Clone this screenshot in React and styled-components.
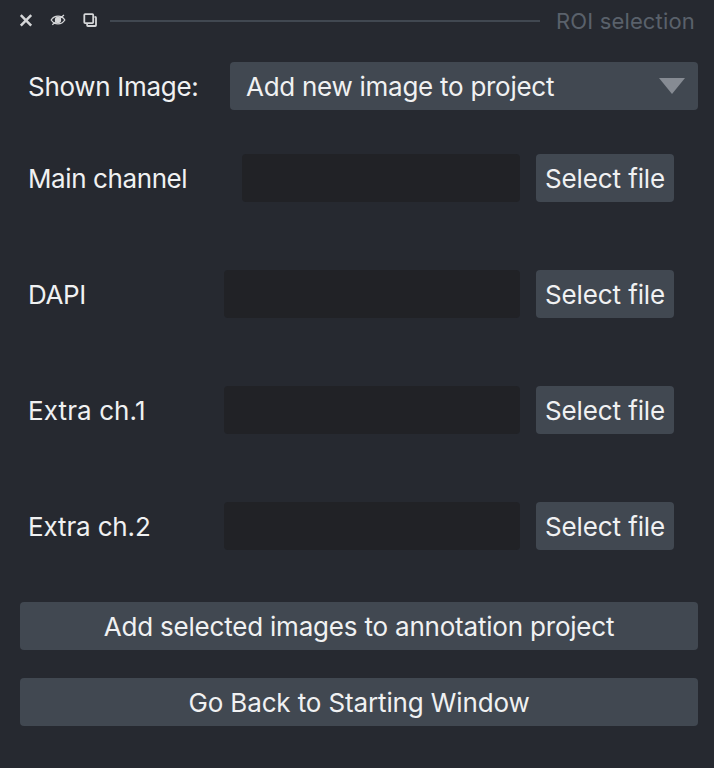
import React from "react";
import styled, { createGlobalStyle } from "styled-components";

const Global = createGlobalStyle`
  * { box-sizing: border-box; }
  body { margin: 0; background: #262930; }
`;

const Panel = styled.main`
  width: 714px;
  height: 768px;
  display: flex;
  flex-direction: column;
  background: #262930;
  color: #f0f1f2;
  font: 26px/48px Inter, sans-serif;
  overflow: hidden;
  white-space: nowrap;
`;

const TitleBar = styled.header`
  height: 40px;
  display: flex;
  align-items: center;
  padding: 0 20px 0 18px;
`;

const IconButton = styled.button`
  width: 16px;
  height: 16px;
  margin-right: 16px;
  padding: 0;
  border: 0;
  background: none;
  color: #d5d6d8;
  svg { display: block; }
`;

const Rule = styled.div`
  flex: none;
  width: 430px;
  height: 2px;
  margin: 2px 0 0 -4px;
  background: #414851;
`;

const Title = styled.span`
  margin-left: 16px;
  padding-top: 2px;
  font-size: 22px;
  line-height: 40px;
  letter-spacing: 0.15px;
  color: #5a616b;
`;

const ImageRow = styled.div`
  display: flex;
  height: 48px;
  margin-top: 22px;
  padding: 0 16px 0 28px;
`;

const Label = styled.label`
  flex: 1;
  padding-top: 1px;
  line-height: 48px;
  letter-spacing: ${(p) => p.$tracking || 0}px;
`;

const Select = styled.button`
  width: 468px;
  height: 48px;
  display: flex;
  align-items: center;
  justify-content: space-between;
  padding: 2px 13px 0 16px;
  border: 0;
  border-radius: 4px;
  background: #414851;
  color: inherit;
  font: inherit;
  letter-spacing: -0.27px;
  svg { margin-top: -2px; }
`;

const Channels = styled.section`
  display: grid;
  gap: 68px;
  margin-top: 44px;
  padding: 0 40px 0 28px;
`;

const ChannelRow = styled.div`
  display: flex;
  height: 48px;
`;

const FileInput = styled.input`
  width: ${(p) => p.$width}px;
  height: 48px;
  margin-right: 16px;
  border: 0;
  border-radius: 4px;
  background: #212226;
  color: inherit;
  font: inherit;
`;

const Button = styled.button`
  height: 48px;
  padding: 2px 0 0;
  width: ${(p) => p.$width || "auto"};
  border: 0;
  border-radius: 4px;
  background: #414851;
  color: inherit;
  font: inherit;
  line-height: 46px;
  letter-spacing: ${(p) => p.$tracking || 0}px;
`;

const Actions = styled.footer`
  display: grid;
  gap: 28px;
  margin-top: 52px;
  padding: 0 16px 0 20px;
`;

const channels = [
  { name: "Main channel", width: 278, tracking: -0.4 },
  { name: "DAPI", width: 296, tracking: -0.4 },
  { name: "Extra ch.1", width: 296, tracking: 0.1 },
  { name: "Extra ch.2", width: 296, tracking: -0.15 },
];

export default function App() {
  return (
    <Panel>
      <Global />
      <TitleBar>
        <IconButton aria-label="Close">
          <svg width="16" height="16" viewBox="0 0 16 16" fill="none" stroke="currentColor" strokeWidth="2.5">
            <path d="M2.8 3.2l10.4 10.4M13.2 3.2L2.8 13.6" />
          </svg>
        </IconButton>
        <IconButton aria-label="Hide">
          <svg width="16" height="16" viewBox="0 0 16 16" fill="none" stroke="currentColor" strokeWidth="1.3">
            <path d="M1.2 8c3.2-5.2 10.4-5.2 13.6 0c-3.2 5.2-10.4 5.2-13.6 0zM2.3 12.8L14 3" />
            <circle cx="8" cy="8" r="2.5" fill="currentColor" />
          </svg>
        </IconButton>
        <IconButton aria-label="Float">
          <svg width="16" height="16" viewBox="0 0 16 16" fill="none" stroke="currentColor" strokeWidth="1.8" strokeLinejoin="round" strokeLinecap="round">
            <rect x="2.3" y="2.2" width="8.9" height="8.9" rx="0.8" />
            <path d="M5.1 12.5V13.2q0 .8.8.8H13.2q.8 0 .8-.8V5.8q0-.8-.8-.8" />
          </svg>
        </IconButton>
        <Rule />
        <Title>ROI selection</Title>
      </TitleBar>
      <ImageRow>
        <Label $tracking={-0.3}>Shown Image:</Label>
        <Select>
          <span>Add new image to project</span>
          <svg width="26" height="16" viewBox="0 0 26 16"><path d="M0 0h26L13 16z" fill="#868b93" /></svg>
        </Select>
      </ImageRow>
      <Channels>
        {channels.map((c) => (
          <ChannelRow key={c.name}>
            <Label $tracking={c.tracking}>{c.name}</Label>
            <FileInput $width={c.width} aria-label={c.name} />
            <Button $width="138px" $tracking={-0.1}>Select file</Button>
          </ChannelRow>
        ))}
      </Channels>
      <Actions>
        <Button $tracking={-0.2}>Add selected images to annotation project</Button>
        <Button $tracking={-0.13}>Go Back to Starting Window</Button>
      </Actions>
    </Panel>
  );
}
